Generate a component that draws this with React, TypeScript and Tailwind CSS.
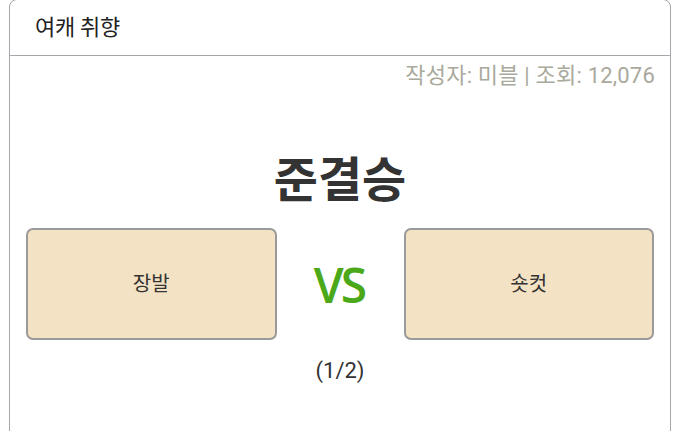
import React from 'react';

const font = { fontFamily: 'Roboto, "Noto Sans CJK KR", sans-serif' };

export default function App() {
  return (
    <div className="w-[680px] h-[431px] overflow-hidden bg-white" style={font}>
      <div className="ml-[9px] mr-[9px] -mt-[1px] h-[460px] border-[1.5px] border-[#a3a7ab] rounded-t-[8px] bg-white">
        <div className="h-[56px] border-b-[1.5px] border-[#a3a7ab] flex items-center pl-[25px]">
          <span className="text-[22px] text-[#222] tracking-[-0.3px]">여캐 취향</span>
        </div>
        <div className="flex justify-end pr-[15px] pt-[4px] leading-[32px]">
          <span className="text-[22px] text-[#a9a99c] tracking-[0.2px]">작성자: 미블 | 조회: 12,076</span>
        </div>
        <h1 className="text-center text-[48px] font-bold text-[#333] mt-[61px] leading-[56px]">준결승</h1>
        <div className="grid grid-cols-[1fr_127px_1fr] px-[16px] mt-[19px] items-center">
          <button className="h-[112px] rounded-[7px] border-2 border-[#9a9a9a] bg-[#f3e2c4] text-[20px] text-[#333]">장발</button>
          <div className="flex justify-center pt-[2px]">
            <span className="text-[48px] font-semibold text-[#4aa819] tracking-[-3px] pr-[2px]" style={{ fontFamily: '"Open Sans", sans-serif' }}>VS</span>
          </div>
          <button className="h-[112px] rounded-[7px] border-2 border-[#9a9a9a] bg-[#f3e2c4] text-[20px] text-[#333]">숏컷</button>
        </div>
        <div className="text-center text-[22px] text-[#333] mt-[14px] leading-[33px]">(1/2)</div>
      </div>
    </div>
  );
}
